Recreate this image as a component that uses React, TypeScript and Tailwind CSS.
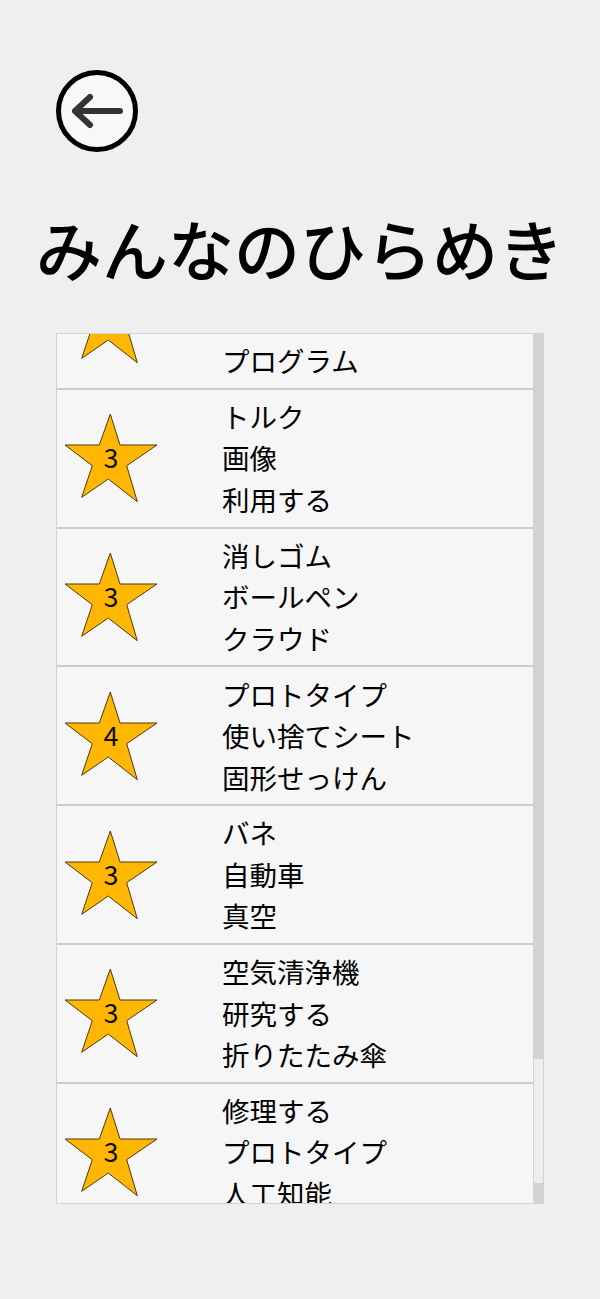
import React from 'react';

const rows = [
    { score: 3, words: ['', '', 'プログラム'] },
    { score: 3, words: ['トルク', '画像', '利用する'] },
    { score: 3, words: ['消しゴム', 'ボールペン', 'クラウド'] },
    { score: 4, words: ['プロトタイプ', '使い捨てシート', '固形せっけん'] },
    { score: 3, words: ['バネ', '自動車', '真空'] },
    { score: 3, words: ['空気清浄機', '研究する', '折りたたみ傘'] },
    { score: 3, words: ['修理する', 'プロトタイプ', '人工知能'] },
];

const Star = ({ score }: { score: number }) => (
    <div className="relative w-[94px] h-[90px] shrink-0">
        <svg viewBox="0 0 94 90" className="w-[94px] h-[90px]">
            <path
                d="M46.3 1 L56 32 L93 32 L62.7 52.7 L73.3 88.7 L44.3 66 L17.7 84.3 L28.3 52.7 L1 32 L35.3 32 Z"
                fill="#ffb703"
                stroke="#4a3a10"
                strokeWidth="1"
            />
        </svg>
        <span className="absolute left-0 right-0 top-[26px] text-center text-[27px] leading-[36px] text-[#111111]">
            {score}
        </span>
    </div>
);

const App: React.FC = () => {
    return (
        <div className="w-[600px] h-[1299px] bg-[#efefef] overflow-hidden font-['Noto_Sans_CJK_JP','Noto_Sans',sans-serif]">
            <div className="pl-[56px] pt-[70px]">
                <button className="w-[82px] h-[82px] rounded-full border-[5px] border-black bg-[#f8f8f8] flex items-center justify-center">
                    <svg viewBox="0 0 72 72" className="w-[72px] h-[72px]">
                        <path
                            d="M29 22 L14 36 L29 50 M14 36 H59"
                            fill="none"
                            stroke="#333333"
                            strokeWidth="6"
                            strokeLinecap="round"
                            strokeLinejoin="round"
                        />
                    </svg>
                </button>
            </div>

            <h1 className="mt-[51px] text-center text-[66px] leading-[88px] text-black font-medium">みんなのひらめき</h1>

            <div className="mt-[42px] ml-[56px] w-[488px] h-[871px] flex border-t border-b border-l border-[#d2d2d2] overflow-hidden">
                <div className="flex-1 overflow-hidden">
                    <div className="-mt-[83px]">
                        {rows.map((row, i) => (
                            <div key={i} className="h-[138.8px] bg-[#f6f6f6] border-b-2 border-[#cccccc] flex items-center pl-[7px]">
                                <Star score={row.score} />
                                <div className="ml-[64px] text-[27.5px] leading-[41.5px] text-black">
                                    {row.words.map((w, j) => (
                                        <div key={j} className="h-[41.5px] whitespace-nowrap">{w}</div>
                                    ))}
                                </div>
                            </div>
                        ))}
                    </div>
                </div>
                {/* scrollbar */}
                <div className="w-[11px] flex flex-col">
                    <div className="h-[725px] bg-[#d2d2d2]" />
                    <div className="h-[124px] bg-[#ededed] border-x border-[#d2d2d2]" />
                    <div className="flex-1 bg-[#d2d2d2] rounded-b-[2px]" />
                </div>
            </div>
        </div>
    );
};

export default App;
